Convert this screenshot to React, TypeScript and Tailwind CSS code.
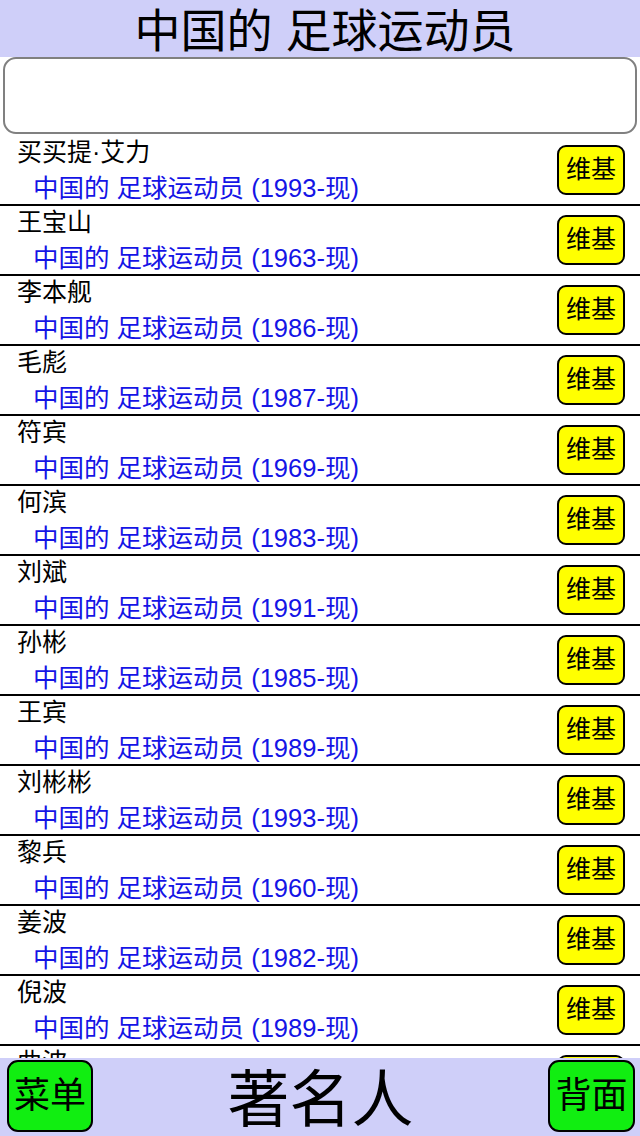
const players = [
  { name: "买买提·艾力", born: "1993" },
  { name: "王宝山", born: "1963" },
  { name: "李本舰", born: "1986" },
  { name: "毛彪", born: "1987" },
  { name: "符宾", born: "1969" },
  { name: "何滨", born: "1983" },
  { name: "刘斌", born: "1991" },
  { name: "孙彬", born: "1985" },
  { name: "王宾", born: "1989" },
  { name: "刘彬彬", born: "1993" },
  { name: "黎兵", born: "1960" },
  { name: "姜波", born: "1982" },
  { name: "倪波", born: "1989" },
  { name: "曲波", born: "1981" },
];

const font = {
  fontFamily: '"Liberation Sans", "Noto Sans CJK SC", sans-serif',
};

function PlayerRow({ name, born }: { name: string; born: string }) {
  return (
    <div className="flex h-[70px] shrink-0 items-center justify-between border-b-2 border-black bg-white">
      <div className="flex flex-col self-start pl-[17px]">
        <span className="text-[25px] leading-[32px] text-black">{name}</span>
        <span className="pl-[16px] pt-[4px] text-[25.5px] leading-[32px] text-[#1414e6]">
          中国的 足球运动员 ({born}-现)
        </span>
      </div>
      <button className="mr-[15px] flex h-[50px] w-[68px] items-center justify-center rounded-[9px] border-2 border-black bg-[#ffff00] text-[25px] text-black">
        维基
      </button>
    </div>
  );
}

export default function App() {
  return (
    <div className="flex h-[1136px] w-[640px] flex-col overflow-hidden bg-white" style={font}>
      <div className="flex h-[57px] shrink-0 items-center justify-center bg-[#cfcff9] pl-[10px] pt-[5px]">
        <h1 className="text-[46px] leading-[52px] text-black">中国的 足球运动员</h1>
      </div>
      <div className="mx-[3px] mb-[2px] h-[77px] shrink-0 rounded-[13px] border-2 border-[#808080] bg-white"></div>
      <div className="flex min-h-0 flex-1 flex-col overflow-hidden">
        {players.map((p) => (
          <PlayerRow key={p.name} name={p.name} born={p.born} />
        ))}
      </div>
      <div className="flex h-[78px] shrink-0 items-start justify-between bg-[#cfcff9] pl-[7px] pr-[5px] pt-[2px]">
        <button className="flex h-[72px] w-[86px] items-center justify-center rounded-[11px] border-2 border-black bg-[#11ee11] text-[36px] leading-[40px] text-black">
          菜单
        </button>
        <span className="self-center pt-[6px] text-[62px] leading-[64px] text-black">著名人</span>
        <button className="flex h-[72px] w-[87px] items-center justify-center rounded-[11px] border-2 border-black bg-[#11ee11] text-[36px] leading-[40px] text-black">
          背面
        </button>
      </div>
    </div>
  );
}
